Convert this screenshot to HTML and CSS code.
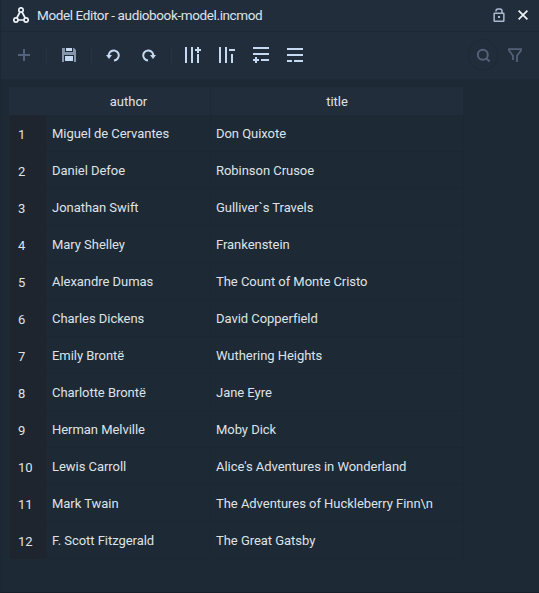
FILE: index.html
```html
<!DOCTYPE html>
<html lang="en">
<head>
<meta charset="utf-8">
<title>Model Editor</title>
<link rel="stylesheet" href="styles.css">
</head>
<body>
<main class="window">
  <header class="titlebar">
    <svg class="logo" width="16" height="16" viewBox="0 0 16 16" fill="none" stroke="#eef3f8" stroke-width="1.7"><circle cx="8" cy="3" r="2.2"/><circle cx="2.9" cy="13" r="2.1"/><circle cx="13.1" cy="13" r="2.1"/><path d="M7 5 3.8 11M9 5l3.2 6M5 13h6"/></svg>
    <h1>Model Editor - audiobook-model.incmod</h1>
    <svg class="lock" width="12" height="14" viewBox="0 0 12 14" fill="none" stroke="#a9b9cf" stroke-width="1.5"><rect x="1.15" y="5.15" width="9.7" height="8.2" rx=".6"/><path d="M3 3.4V3a2 2 0 0 1 2-2h2a2 2 0 0 1 2 2v2"/><rect x="5" y="8" width="2" height="2" fill="#a9b9cf" stroke="none"/></svg>
    <svg class="close" width="10" height="10" viewBox="0 0 10 10" stroke="#f0f2f5" stroke-width="1.7"><path d="m.6.6 8.8 8.8M9.4.6.6 9.4"/></svg>
  </header>
  <nav class="toolbar">
    <svg class="add" width="12" height="12" viewBox="0 0 12 12" fill="#53627a"><path d="M5 0h2v5h5v2H7v5H5V7H0V5h5z"/></svg>
    <i class="sep sep-add"></i>
    <svg class="save" width="14" height="14" viewBox="0 0 14 14"><path d="M0 0h12l2 2v12H0z" fill="#8595ab"/><path d="M3 0h8v4H3zM2 7h10v7H2z" fill="#222d3c"/><path d="M4 0h6v3H4zM3 8h8v5H3z" fill="#c5d9f3"/></svg>
    <i class="sep sep-save"></i>
    <svg class="undo" width="14" height="13" viewBox="0 0 14 13"><path d="M2.8 6.8A5 5 0 1 1 8 11.4" fill="none" stroke="#c5d9f3" stroke-width="2"/><path d="M0 6h6L3 10z" fill="#c5d9f3"/></svg>
    <svg class="redo" width="14" height="13" viewBox="0 0 14 13"><path d="M11.2 6.8A5 5 0 1 0 6 11.4" fill="none" stroke="#c5d9f3" stroke-width="2"/><path d="M14 6H8l3 4z" fill="#c5d9f3"/></svg>
    <i class="sep sep-redo"></i>
    <svg class="col-add" width="16" height="16" viewBox="0 0 16 16" fill="#c5d9f3"><path d="M0 0h2v16H0zM6 0h2v16H6zM12 0h2v2h2v2h-2v2h-2V4h-2V2h2zM12 7h2v9h-2z"/></svg>
    <svg class="tool" width="16" height="16" viewBox="0 0 16 16" fill="#c5d9f3"><path d="M0 0h2v16H0zM6 0h2v16H6zM10 2h6v2h-6zM12 7h2v9h-2z"/></svg>
    <svg class="tool" width="16" height="16" viewBox="0 0 16 16" fill="#c5d9f3"><path d="M0 0h16v2H0zM0 6h16v2H0zM2 10h2v2h2v2H4v2H2v-2H0v-2h2zM8 12h8v2H8z"/></svg>
    <svg class="tool" width="16" height="16" viewBox="0 0 16 16" fill="#c5d9f3"><path d="M0 1h16v2H0zM0 7h16v2H0zM0 13h5v2H0zM7 13h9v2H7z"/></svg>
    <span class="search"><svg width="14" height="14" viewBox="0 0 14 14" fill="none" stroke="#53627a" stroke-width="2"><circle cx="6.8" cy="6.8" r="5"/><path d="m10 10 3.5 3.5"/></svg></span>
    <svg class="filter" width="14" height="15" viewBox="0 0 14 15" fill="none" stroke="#53627a" stroke-width="1.8"><path d="M5 12V7.8L1 2.5V1.2h12v1.3L9 7.8V14"/></svg>
  </nav>
  <section class="content">
    <table>
      <colgroup><col class="c-num"><col class="c-author"><col class="c-title"></colgroup>
      <thead><tr><th></th><th>author</th><th>title</th></tr></thead>
      <tbody>
        <tr><td>1</td><td>Miguel de Cervantes</td><td>Don Quixote</td></tr>
        <tr><td>2</td><td>Daniel Defoe</td><td>Robinson Crusoe</td></tr>
        <tr><td>3</td><td>Jonathan Swift</td><td>Gulliver`s Travels</td></tr>
        <tr><td>4</td><td>Mary Shelley</td><td>Frankenstein</td></tr>
        <tr><td>5</td><td>Alexandre Dumas</td><td>The Count of Monte Cristo</td></tr>
        <tr><td>6</td><td>Charles Dickens</td><td>David Copperfield</td></tr>
        <tr><td>7</td><td>Emily Brontë</td><td>Wuthering Heights</td></tr>
        <tr><td>8</td><td>Charlotte Brontë</td><td>Jane Eyre</td></tr>
        <tr><td>9</td><td>Herman Melville</td><td>Moby Dick</td></tr>
        <tr><td>10</td><td>Lewis Carroll</td><td>Alice's Adventures in Wonderland</td></tr>
        <tr><td>11</td><td>Mark Twain</td><td>The Adventures of Huckleberry Finn\n</td></tr>
        <tr><td>12</td><td>F. Scott Fitzgerald</td><td>The Great Gatsby</td></tr>
      </tbody>
    </table>
  </section>
</main>
</body>
</html>
```
FILE: styles.css
```css
* { box-sizing: border-box; }
body { margin: 0; background: #1d2935; color: #dfe3e8; font: 13px/16px Roboto, sans-serif; }
svg { display: block; flex: none; }
.window { height: 593px; border-left: 1px solid #1d2631; border-bottom: 1px solid #17202a; overflow: hidden; }
.titlebar { height: 32px; display: flex; align-items: flex-start; background: #222d3c; border-bottom: 1px solid #1e2835; }
.logo { margin: 7px 0 0 12px; }
h1 { margin: 7px 0 0 8px; font-size: 13.5px; font-weight: 400; line-height: 16px; letter-spacing: -.38px; white-space: nowrap; }
.lock { margin: 8px 0 0 auto; }
.close { margin: 10px 11px 0 13px; }
.toolbar { height: 47px; display: flex; align-items: center; padding: 0 17px 1px 17px; background: #222d3c; }
.sep { width: 1px; height: 17px; background: #273342; }
.sep-add { margin: 0 15px 0 16px; }
.sep-save { margin: 0 14px 0 15px; }
.sep-redo { margin: 0 13px 0 15px; }
.redo { margin-left: 22px; }
.tool { margin-left: 18px; }
.search { width: 30px; height: 32px; margin-left: auto; display: grid; place-items: center; border: 1px solid #1f2937; border-radius: 50%; }
.filter { margin-left: 10px; }
.content { padding: 8px 0 0 8px; }
table { width: 455px; table-layout: fixed; border-collapse: separate; border-spacing: 0; }
.c-num { width: 38px; }
.c-author { width: 164px; }
.c-title { width: 253px; }
th { height: 28px; padding: 1px 0 0; background: #222d3c; font-weight: 400; text-align: center; border-right: 1px solid #1e2936; }
th:first-child { border-right: 0; }
td { height: 37px; padding: 2px 0 0 5px; border-right: 1px solid #1d2733; border-bottom: 1px solid #1d2733; letter-spacing: -.04px; white-space: nowrap; }
td:first-child { padding: 4px 0 0 8px; background: #1f252f; border-left: 1px solid #1e2935; border-right: 1px solid #1e2732; border-bottom-color: #1f252f; }
```
